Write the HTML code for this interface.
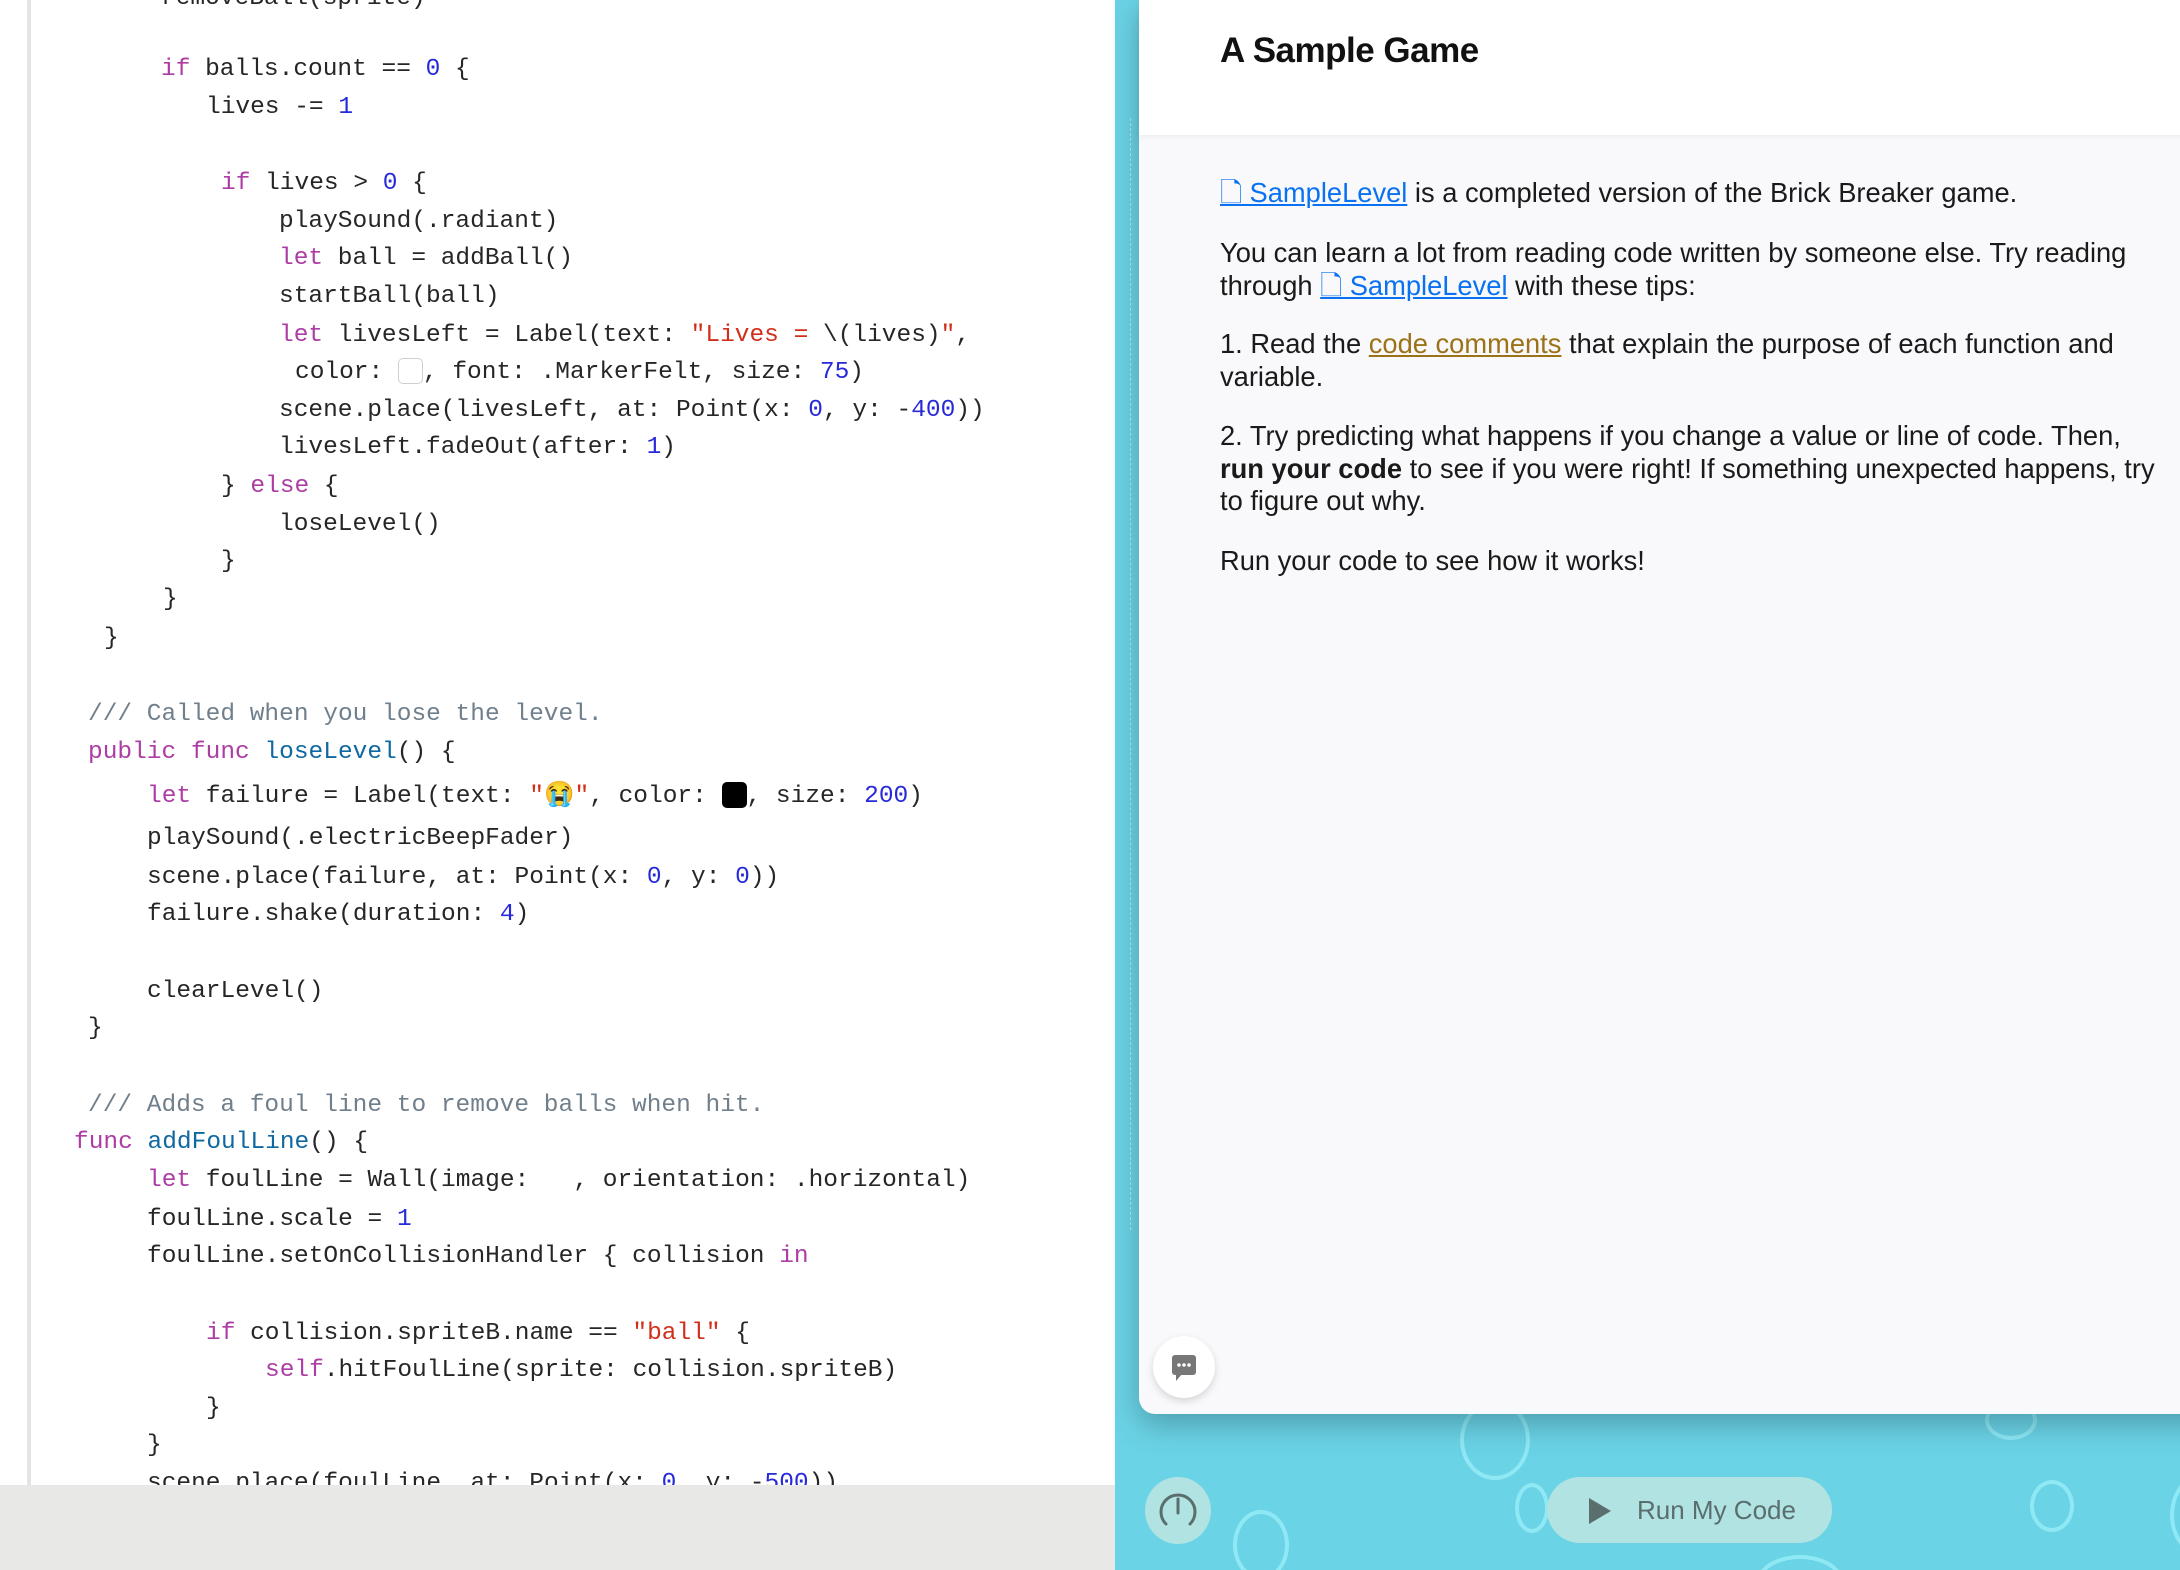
<!DOCTYPE html>
<html><head><meta charset="utf-8"><style>
*{margin:0;padding:0;box-sizing:border-box}
body{width:2180px;height:1570px;overflow:hidden;background:#fff;position:relative;font-family:"Liberation Sans",sans-serif}
#left{position:absolute;left:0;top:0;width:1115px;height:1570px;background:#fff;overflow:hidden}
#left .bar{position:absolute;left:27px;top:0;width:4px;height:1485px;background:#e4e4e4}
#code{position:absolute;left:0;top:2px;width:1115px;height:1570px}
.l{position:absolute;font-family:"Liberation Mono",monospace;font-size:24.5px;line-height:38px;color:#262626;white-space:pre}
.k{color:#ad3da4}.n{color:#272ad8}.s{color:#d12f1b}.c{color:#707f8c}.f{color:#0f68a0}
#gray{position:absolute;left:0;top:1485px;width:1115px;height:85px;background:#e8e8e7;z-index:2}
#right{position:absolute;left:1115px;top:0;width:1065px;height:1570px;background:#6bd3e6;overflow:hidden}
.bub{position:absolute;border:4px solid #8fe9f5;border-radius:50%}
#card{position:absolute;left:24px;top:0;width:1100px;height:1414px;background:#f9f9fb;border-bottom-left-radius:16px;box-shadow:0 10px 30px rgba(40,90,100,.45)}
#hdr{position:absolute;left:0;top:0;width:100%;height:135px;background:#fff;box-shadow:0 2px 6px rgba(0,0,0,.05)}
h1{position:absolute;left:81px;top:31px;font-size:35px;font-weight:bold;color:#111;letter-spacing:-0.5px}
.p{position:absolute;left:81px;font-size:27.3px;line-height:32.5px;color:#1a1a1a;width:945px}
a{color:#0a72f0;text-decoration:underline}
.o{color:#9c7219;text-decoration:underline}
.dash{position:absolute;left:15px;top:118px;height:1112px;border-left:1.5px dashed #b9e9f2}
</style></head><body>
<div id="left">
<div class="bar"></div>
<div id="code">
<div class="l" style="left:161px;top:-22px">removeBall(sprite)</div>
<div class="l" style="left:161px;top:49px"><span class="k">if</span> balls.count == <span class="n">0</span> {</div>
<div class="l" style="left:206px;top:87px">lives -= <span class="n">1</span></div>
<div class="l" style="left:221px;top:163px"><span class="k">if</span> lives &gt; <span class="n">0</span> {</div>
<div class="l" style="left:279px;top:201px">playSound(.radiant)</div>
<div class="l" style="left:279px;top:238px"><span class="k">let</span> ball = addBall()</div>
<div class="l" style="left:279px;top:276px">startBall(ball)</div>
<div class="l" style="left:279px;top:315px"><span class="k">let</span> livesLeft = Label(text: <span class="s">"Lives = </span>\(lives)<span class="s">"</span>,</div>
<div class="l" style="left:295px;top:352px">color: <span style="display:inline-block;width:25px;height:26px;border:1.5px solid #d0d0d0;border-radius:5px;vertical-align:-6px;background:#fff"></span>, font: .MarkerFelt, size: <span class="n">75</span>)</div>
<div class="l" style="left:279px;top:390px">scene.place(livesLeft, at: Point(x: <span class="n">0</span>, y: -<span class="n">400</span>))</div>
<div class="l" style="left:279px;top:427px">livesLeft.fadeOut(after: <span class="n">1</span>)</div>
<div class="l" style="left:221px;top:466px">} <span class="k">else</span> {</div>
<div class="l" style="left:279px;top:504px">loseLevel()</div>
<div class="l" style="left:221px;top:541px">}</div>
<div class="l" style="left:163px;top:579px">}</div>
<div class="l" style="left:104px;top:618px">}</div>
<div class="l c" style="left:88px;top:694px">/// Called when you lose the level.</div>
<div class="l" style="left:88px;top:732px"><span class="k">public func</span> <span class="f">loseLevel</span>() {</div>
<div class="l" style="left:147px;top:776px"><span class="k">let</span> failure = Label(text: <span class="s">"😭"</span>, color: <span style="display:inline-block;width:25px;height:26px;background:#000;border-radius:5px;vertical-align:-6px"></span>, size: <span class="n">200</span>)</div>
<div class="l" style="left:147px;top:818px">playSound(.electricBeepFader)</div>
<div class="l" style="left:147px;top:857px">scene.place(failure, at: Point(x: <span class="n">0</span>, y: <span class="n">0</span>))</div>
<div class="l" style="left:147px;top:894px">failure.shake(duration: <span class="n">4</span>)</div>
<div class="l" style="left:147px;top:971px">clearLevel()</div>
<div class="l" style="left:88px;top:1008px">}</div>
<div class="l c" style="left:88px;top:1085px">/// Adds a foul line to remove balls when hit.</div>
<div class="l" style="left:74px;top:1122px"><span class="k">func</span> <span class="f">addFoulLine</span>() {</div>
<div class="l" style="left:147px;top:1160px"><span class="k">let</span> foulLine = Wall(image:   , orientation: .horizontal)</div>
<div class="l" style="left:147px;top:1199px">foulLine.scale = <span class="n">1</span></div>
<div class="l" style="left:147px;top:1236px">foulLine.setOnCollisionHandler { collision <span class="k">in</span></div>
<div class="l" style="left:206px;top:1313px"><span class="k">if</span> collision.spriteB.name == <span class="s">"ball"</span> {</div>
<div class="l" style="left:265px;top:1350px"><span class="k">self</span>.hitFoulLine(sprite: collision.spriteB)</div>
<div class="l" style="left:206px;top:1388px">}</div>
<div class="l" style="left:147px;top:1425px">}</div>
<div class="l" style="left:147px;top:1463px">scene.place(foulLine, at: Point(x: <span class="n">0</span>, y: -<span class="n">500</span>))</div>
</div>
<div id="gray"></div>
</div>
<div id="right">
<div class="bub" style="left:345px;top:1400px;width:70px;height:80px"></div>
<div class="bub" style="left:400px;top:1483px;width:34px;height:50px"></div>
<div class="bub" style="left:118px;top:1510px;width:56px;height:70px"></div>
<div class="bub" style="left:915px;top:1480px;width:44px;height:52px"></div>
<div class="bub" style="left:870px;top:1400px;width:52px;height:40px"></div>
<div class="bub" style="left:640px;top:1555px;width:90px;height:60px"></div>
<div class="bub" style="left:1055px;top:1475px;width:60px;height:80px"></div>
<div class="dash"></div>
<div id="card">
<div id="hdr"><h1>A Sample Game</h1></div>
<div class="p" style="top:177px"><a href="#">🗋 SampleLevel</a> is a completed version of the Brick Breaker game.</div>
<div class="p" style="top:237px">You can learn a lot from reading code written by someone else. Try reading through <a href="#">🗋 SampleLevel</a> with these tips:</div>
<div class="p" style="top:328px">1. Read the <span class="o">code comments</span> that explain the purpose of each function and variable.</div>
<div class="p" style="top:420px">2. Try predicting what happens if you change a value or line of code. Then, <b>run your code</b> to see if you were right! If something unexpected happens, try to figure out why.</div>
<div class="p" style="top:545px">Run your code to see how it works!</div>
<div style="position:absolute;left:14px;top:1336px;width:62px;height:62px;border-radius:50%;background:#fff;box-shadow:0 3px 8px rgba(0,0,0,.15)">
<svg width="62" height="62" viewBox="0 0 62 62"><rect x="19" y="19" width="24" height="20" rx="3" fill="#777"/><path d="M23 38 L23 45 L29 38Z" fill="#777"/><circle cx="26" cy="29" r="1.8" fill="#fff"/><circle cx="31" cy="29" r="1.8" fill="#fff"/><circle cx="36" cy="29" r="1.8" fill="#fff"/></svg></div>
</div>
<div style="position:absolute;left:30px;top:1477px;width:66px;height:67px;border-radius:50%;background:#b0e3e2">
<svg width="66" height="67" viewBox="0 0 66 67"><path d="M21 47 A17 17 0 1 1 45 47" fill="none" stroke="#5a6e6e" stroke-width="3" stroke-linecap="round"/><line x1="33" y1="22" x2="33" y2="36" stroke="#5a6e6e" stroke-width="3" stroke-linecap="round"/></svg></div>
<div style="position:absolute;left:432px;top:1477px;width:285px;height:66px;border-radius:33px;background:#b0e3e2;color:#5a6e6e;font-size:26px;line-height:66px">
<svg style="position:absolute;left:40px;top:20px" width="26" height="28" viewBox="0 0 26 28"><path d="M2 1 L24 14 L2 27Z" fill="#5a6e6e"/></svg>
<span style="position:absolute;left:90px">Run My Code</span></div>
</div>
</body></html>
